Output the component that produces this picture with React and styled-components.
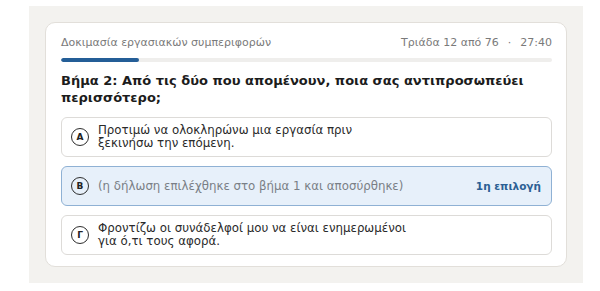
import React from "react";
import styled, { createGlobalStyle } from "styled-components";

const GlobalStyle = createGlobalStyle`
  html, body {
    margin: 0;
    padding: 0;
    background: #ffffff;
    font-family: "DejaVu Sans", "Noto Sans", sans-serif;
  }
`;

const Panel = styled.div`
  margin: 6px 17px 9px 29px;
  padding: 16px 16px 16px 16px;
  background-color: #f3f2ef;
`;

const Card = styled.div`
  background-color: #ffffff;
  border: 1px solid #e2dfda;
  border-radius: 10px;
  padding: 13px 14px 11px 15px;
`;

const Header = styled.div`
  display: flex;
  justify-content: space-between;
  align-items: center;
  font-size: 11px;
  line-height: 14px;
  color: #7a7a7a;
`;

const Meta = styled.div`
  display: flex;
  align-items: center;
`;

const Dot = styled.span`
  margin: 0 9px;
`;

const Track = styled.div`
  margin-top: 8px;
  height: 4px;
  border-radius: 2px;
  background-color: #efeeec;
  overflow: hidden;
`;

const Fill = styled.div`
  height: 100%;
  border-radius: 2px;
  background-color: #245e97;
`;

const Title = styled.h2`
  margin: 10px 0 11px;
  font-size: 13px;
  line-height: 17px;
  font-weight: bold;
  color: #1c1c1c;
`;

const Options = styled.div`
  display: flex;
  flex-direction: column;
  gap: 9px;
`;

const Option = styled.div`
  box-sizing: border-box;
  min-height: 40px;
  display: flex;
  align-items: center;
  gap: 9px;
  padding: 6px 10px 6px 9px;
  border-radius: 6px;
  border: 1px solid ${(p) => (p.$picked ? "#8fb1d4" : "#dddbd8")};
  background-color: ${(p) => (p.$picked ? "#e7f0fa" : "#ffffff")};
`;

const Letter = styled.span`
  flex: none;
  box-sizing: border-box;
  width: 18px;
  height: 18px;
  border-radius: 50%;
  border: 1.5px solid #2e2e2e;
  display: flex;
  align-items: center;
  justify-content: center;
  font-size: 9px;
  font-weight: bold;
  color: #222;
`;

const Text = styled.div`
  flex: 1;
  font-size: 11.8px;
  line-height: 13px;
  color: ${(p) => (p.$muted ? "#7a7f86" : "#2a2a2a")};
`;

const Badge = styled.span`
  font-size: 10.5px;
  font-weight: bold;
  color: #2c5f94;
`;

const options = [
  { letter: "Α", text: ["Προτιμώ να ολοκληρώνω μια εργασία πριν", "ξεκινήσω την επόμενη."] },
  { letter: "Β", text: ["(η δήλωση επιλέχθηκε στο βήμα 1 και αποσύρθηκε)"], picked: true },
  { letter: "Γ", text: ["Φροντίζω οι συνάδελφοί μου να είναι ενημερωμένοι", "για ό,τι τους αφορά."] },
];

const App = () => {
  const progress = (12 / 76) * 100;
  return (
    <>
      <GlobalStyle />
      <Panel>
        <Card>
          <Header>
            <span>Δοκιμασία εργασιακών συμπεριφορών</span>
            <Meta>
              <span>Τριάδα 12 από 76</span>
              <Dot>·</Dot>
              <span>27:40</span>
            </Meta>
          </Header>
          <Track>
            <Fill style={{ width: `${progress}%` }} />
          </Track>
          <Title>
            Βήμα 2: Από τις δύο που απομένουν, ποια σας αντιπροσωπεύει
            περισσότερο;
          </Title>
          <Options>
            {options.map((item, index) => (
              <Option key={index} $picked={item.picked}>
                <Letter>{item.letter}</Letter>
                <Text $muted={item.picked}>
                  {item.text.map((line, i) => (
                    <div key={i}>{line}</div>
                  ))}
                </Text>
                {item.picked && <Badge>1η επιλογή</Badge>}
              </Option>
            ))}
          </Options>
        </Card>
      </Panel>
    </>
  );
};

export default App;
